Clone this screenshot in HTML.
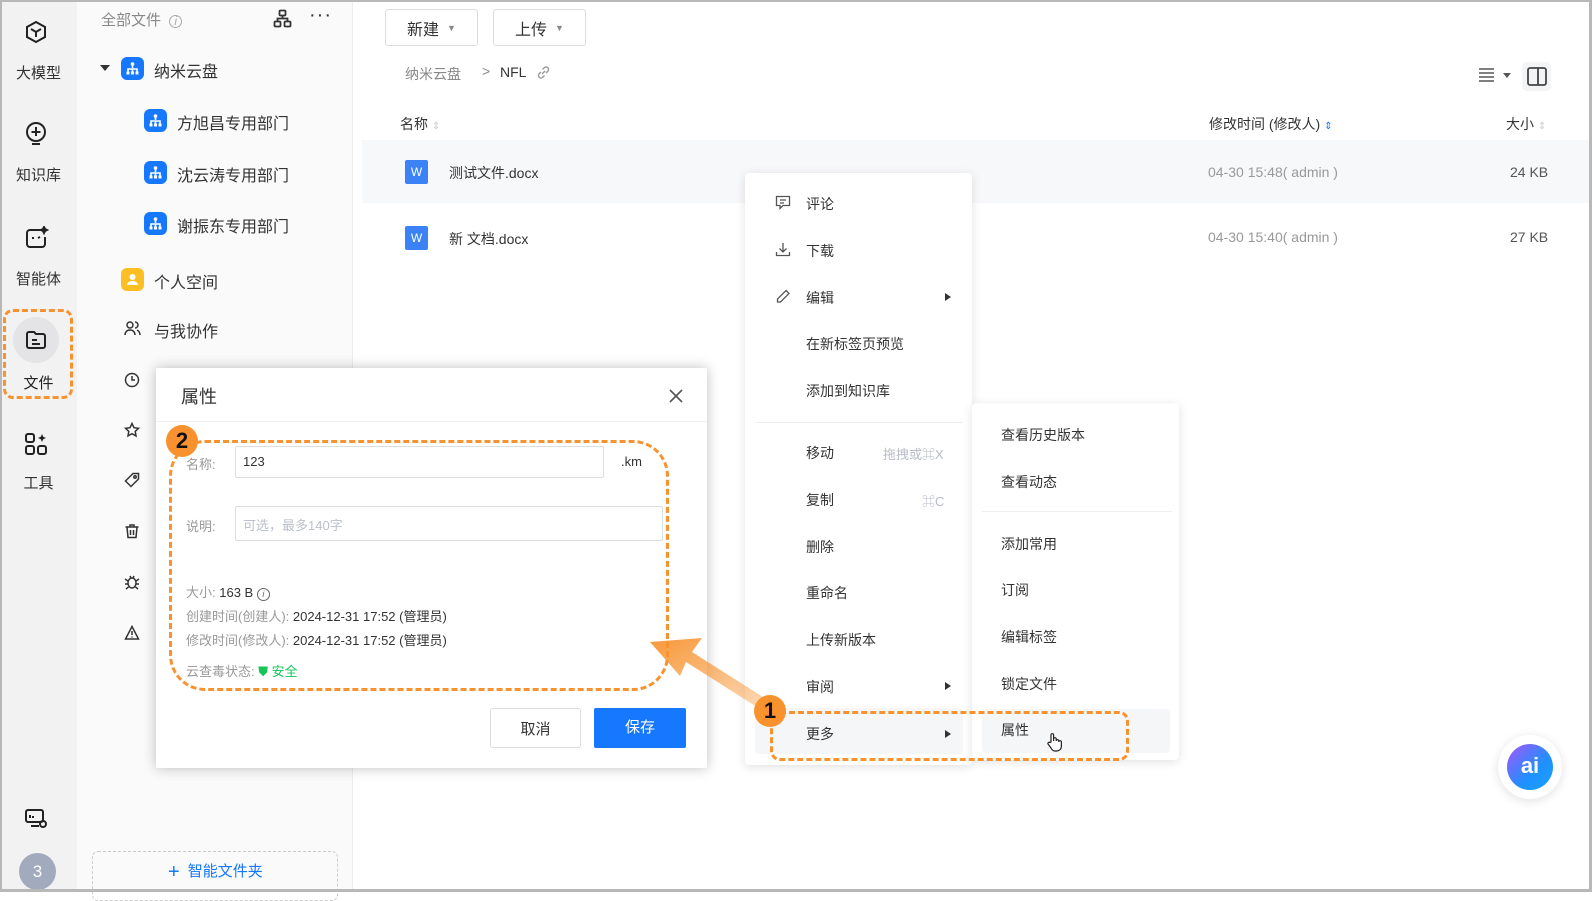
<!DOCTYPE html>
<html><head><meta charset="utf-8"><style>
*{margin:0;padding:0;box-sizing:border-box}
body{width:1592px;height:892px;overflow:hidden;background:#fff;font-family:"Liberation Sans","Noto Sans CJK SC",sans-serif;color:#333;position:relative}
.a{position:absolute;white-space:nowrap}
.frame{position:absolute;left:0;top:0;width:1592px;height:892px;border:2px solid #b8b8b8;border-right:3px solid #b8b8b8;border-bottom:3px solid #b8b8b8;pointer-events:none;z-index:50}
.rail{position:absolute;left:0;top:0;width:77px;height:892px;background:#f2f2f3}
.side{position:absolute;left:77px;top:0;width:276px;height:892px;background:#fafafa;border-right:1px solid #eee}
.rl{font-size:15px;color:#333;width:77px;text-align:center;left:0}
.blue{background:#1677ff;border-radius:6px;width:23px;height:23px}
.t16{font-size:16px;color:#333}
.btn{border:1px solid #ddd;border-radius:3px;font-size:16px;color:#333;display:flex;align-items:center;justify-content:center;gap:8px;background:#fff}
.menu{background:#fff;border-radius:4px;box-shadow:0 2px 10px rgba(0,0,0,.12)}
.mi{font-size:14px;color:#333}
.tri{width:0;height:0;border-left:6px solid #333;border-top:4px solid transparent;border-bottom:4px solid transparent}
.dash{border:3px dashed #f7922e}
.num{width:32px;height:32px;border-radius:50%;background:#f7922e;color:#111;font-weight:bold;font-size:22px;display:flex;align-items:center;justify-content:center}
.lab{color:#999;font-size:13px}
</style></head><body>
<div class="rail"></div>
<div class="side"></div>

<svg width="0" height="0" style="position:absolute"><defs><g id="org"><rect x="0" y="0" width="23" height="23" rx="6" fill="#1677ff"/><path d="M11.5 7v4M7 15v-3h9v3M11.5 12v3" stroke="#fff" stroke-width="1.6" fill="none"/><circle cx="11.5" cy="7" r="1.8" fill="#fff"/><rect x="5.5" y="14.5" width="3" height="3" fill="#fff"/><rect x="10" y="14.5" width="3" height="3" fill="#fff"/><rect x="14.5" y="14.5" width="3" height="3" fill="#fff"/></g></defs></svg>

<!-- rail icons -->
<svg class="a" style="left:24px;top:20px" width="24" height="24" viewBox="0 0 24 24" fill="none" stroke="#222" stroke-width="2"><path d="M12 2l9 5v10l-9 5-9-5V7z"/><path d="M7 9l5 3 5-3M12 12v5"/></svg>
<div class="a rl" style="top:62px">大模型</div>
<svg class="a" style="left:24px;top:121px" width="24" height="26" viewBox="0 0 24 26" fill="none" stroke="#222" stroke-width="2"><circle cx="12" cy="11" r="9"/><path d="M12 6v9M7.5 11h9M8 23h8"/></svg>
<div class="a rl" style="top:164px">知识库</div>
<svg class="a" style="left:24px;top:226px" width="26" height="24" viewBox="0 0 26 24" fill="none" stroke="#222" stroke-width="2"><path d="M17 4H6a3 3 0 0 0-3 3v11a3 3 0 0 0 3 3h12a3 3 0 0 0 3-3v-7"/><path d="M9 11v2M14 12l2-1" /><path d="M20 1l1 2 2 1-2 1-1 2-1-2-2-1 2-1z" fill="#222"/></svg>
<div class="a rl" style="top:268px">智能体</div>
<div class="a" style="left:13px;top:317px;width:46px;height:46px;border-radius:50%;background:#e4e4e6"></div>
<svg class="a" style="left:25px;top:329px" width="22" height="22" viewBox="0 0 22 22" fill="none" stroke="#222" stroke-width="2"><path d="M2 5a2 2 0 0 1 2-2h5l2 2h7a2 2 0 0 1 2 2v10a2 2 0 0 1-2 2H4a2 2 0 0 1-2-2z"/><path d="M7 11h5M7 15h8"/></svg>
<div class="a rl" style="top:372px;color:#222">文件</div>
<div class="a dash" style="left:3px;top:309px;width:70px;height:90px;border-radius:10px"></div>
<svg class="a" style="left:24px;top:432px" width="24" height="24" viewBox="0 0 24 24" fill="none" stroke="#222" stroke-width="2"><rect x="2" y="2" width="8" height="8" rx="2"/><rect x="2" y="14" width="8" height="8" rx="2"/><rect x="14" y="14" width="8" height="8" rx="2"/><path d="M18 2l1.2 2.8L22 6l-2.8 1.2L18 10l-1.2-2.8L14 6l2.8-1.2z" fill="#222" stroke="none"/></svg>
<div class="a rl" style="top:472px">工具</div>
<svg class="a" style="left:24px;top:808px" width="24" height="22" viewBox="0 0 24 22" fill="none" stroke="#222" stroke-width="2"><rect x="2" y="2" width="17" height="12" rx="2"/><path d="M7 18h8M6 10V7M9 10V8"/><circle cx="19" cy="16" r="3"/></svg>
<div class="a" style="left:19px;top:853px;width:37px;height:37px;border-radius:50%;background:#a2abbd;color:#fff;font-size:17px;display:flex;align-items:center;justify-content:center">3</div>

<!-- sidebar -->
<div class="a" style="left:101px;top:9px;font-size:15px;color:#888">全部文件 <span style="font-size:12px;border:1px solid #aaa;border-radius:50%;display:inline-block;width:13px;height:13px;line-height:11px;text-align:center;color:#aaa;margin-left:4px;font-style:italic">i</span></div>
<svg class="a" style="left:273px;top:9px" width="19" height="19" viewBox="0 0 19 19" fill="none" stroke="#333" stroke-width="1.8"><rect x="6.5" y="1.5" width="6" height="5" rx="1"/><rect x="1.5" y="12.5" width="6" height="5" rx="1"/><rect x="11.5" y="12.5" width="6" height="5" rx="1"/><path d="M9.5 6.5v3M4.5 12.5v-3h10v3"/></svg>
<div class="a" style="left:309px;top:4px;font-size:20px;color:#333;letter-spacing:1px">···</div>
<div class="a" style="left:100px;top:65px;width:0;height:0;border-top:6px solid #333;border-left:5px solid transparent;border-right:5px solid transparent"></div>
<svg class="a" style="left:121px;top:57px" width="23" height="23"><use href="#org"/></svg>
<div class="a t16" style="left:154px;top:58px">纳米云盘</div>
<svg class="a" style="left:144px;top:109px" width="23" height="23"><use href="#org"/></svg><div class="a t16" style="left:177px;top:110px">方旭昌专用部门</div>
<svg class="a" style="left:144px;top:161px" width="23" height="23"><use href="#org"/></svg><div class="a t16" style="left:177px;top:162px">沈云涛专用部门</div>
<svg class="a" style="left:144px;top:212px" width="23" height="23"><use href="#org"/></svg><div class="a t16" style="left:177px;top:213px">谢振东专用部门</div>
<svg class="a" style="left:121px;top:268px" width="23" height="23"><rect width="23" height="23" rx="6" fill="#fbbf24"/><circle cx="11.5" cy="9" r="3" fill="#fff"/><path d="M6 17a5.5 4 0 0 1 11 0z" fill="#fff"/></svg>
<div class="a t16" style="left:154px;top:269px">个人空间</div>
<svg class="a" style="left:124px;top:320px" width="17" height="16" viewBox="0 0 17 16" fill="none" stroke="#333" stroke-width="1.5"><circle cx="6" cy="5" r="3"/><path d="M1 15c0-3 2-5 5-5s5 2 5 5M11 2a3 3 0 0 1 0 6M13 10c2 1 3 3 3 5"/></svg>
<div class="a t16" style="left:154px;top:318px">与我协作</div>
<svg class="a" style="left:124px;top:372px" width="16" height="16" viewBox="0 0 16 16" fill="none" stroke="#333" stroke-width="1.5"><circle cx="8" cy="8" r="6.5"/><path d="M8 4v4h3"/></svg>
<svg class="a" style="left:124px;top:422px" width="16" height="16" viewBox="0 0 16 16" fill="none" stroke="#333" stroke-width="1.5"><path d="M8 1.5l2 4.2 4.5.6-3.3 3.1.8 4.5L8 11.7l-4 2.2.8-4.5L1.5 6.3 6 5.7z"/></svg>
<svg class="a" style="left:124px;top:472px" width="16" height="16" viewBox="0 0 16 16" fill="none" stroke="#333" stroke-width="1.5"><path d="M9 1.5h5.5V7L7 14.5 1.5 9z"/><circle cx="11" cy="5" r="1.2"/></svg>
<svg class="a" style="left:124px;top:523px" width="16" height="16" viewBox="0 0 16 16" fill="none" stroke="#333" stroke-width="1.5"><path d="M1.5 4h13M6 4V2h4v2M3 4l1 10.5h8L13 4M6.5 7v5M9.5 7v5"/></svg>
<svg class="a" style="left:124px;top:574px" width="16" height="16" viewBox="0 0 16 16" fill="none" stroke="#333" stroke-width="1.5"><ellipse cx="8" cy="9" rx="4" ry="5"/><path d="M1 5l3 2M15 5l-3 2M1 10h3M15 10h-3M2 15l2.5-2M14 15l-2.5-2M6 2l1 2M10 2l-1 2"/></svg>
<svg class="a" style="left:124px;top:625px" width="16" height="16" viewBox="0 0 16 16" fill="none" stroke="#333" stroke-width="1.5"><path d="M8 1.5l6.5 12.5h-13z"/><path d="M8 6v4M8 11.5v1"/></svg>
<div class="a" style="left:92px;top:851px;width:246px;height:50px;border:1px dashed #ccc;border-radius:6px"></div>
<div class="a" style="left:168px;top:860px;font-size:15px;color:#1677ff"><span style="font-size:20px;margin-right:8px;vertical-align:-2px">+</span>智能文件夹</div>

<!-- main top -->
<div class="a btn" style="left:385px;top:9px;width:93px;height:37px">新建 <span style="font-size:9px;color:#888">▼</span></div>
<div class="a btn" style="left:493px;top:9px;width:93px;height:37px">上传 <span style="font-size:9px;color:#888">▼</span></div>
<div class="a" style="left:405px;top:64px;font-size:14px;color:#888">纳米云盘</div>
<div class="a" style="left:482px;top:63px;font-size:14px;color:#888">&gt;</div>
<div class="a" style="left:500px;top:64px;font-size:14px;color:#333">NFL</div>
<svg class="a" style="left:536px;top:65px" width="15" height="15" viewBox="0 0 15 15" fill="none" stroke="#999" stroke-width="1.4"><path d="M6 9l3-3M5 7L3 9a2.5 2.5 0 0 0 3.5 3.5L8.5 10.5M10 8l2-2A2.5 2.5 0 0 0 8.5 2.5L6.5 4.5"/></svg>
<svg class="a" style="left:1478px;top:67px" width="17" height="16" viewBox="0 0 17 16" fill="none" stroke="#555" stroke-width="1.5"><path d="M1 2h15M1 6h15M1 10h15M1 14h15"/></svg>
<div class="a" style="left:1503px;top:73px;width:0;height:0;border-top:5px solid #555;border-left:4px solid transparent;border-right:4px solid transparent"></div>
<div class="a" style="left:1522px;top:62px;width:29px;height:29px;background:#f3f4f6;border-radius:5px"></div>
<svg class="a" style="left:1527px;top:67px" width="20" height="19" viewBox="0 0 20 19" fill="none" stroke="#444" stroke-width="1.8"><rect x="1" y="1" width="18" height="17" rx="2"/><path d="M11 1v17"/></svg>
<div class="a" style="left:400px;top:114px;font-size:14px;color:#333">名称 <span style="color:#ccc;font-size:10px">⇕</span></div>
<div class="a" style="left:1209px;top:114px;font-size:14px;color:#333">修改时间 (修改人) <span style="color:#1677ff;font-size:10px">⇕</span></div>
<div class="a" style="left:1506px;top:114px;font-size:14px;color:#333">大小 <span style="color:#ccc;font-size:10px">⇕</span></div>
<div class="a" style="left:362px;top:140px;width:1228px;height:63px;background:#f7f8fa"></div>
<div class="a" style="left:405px;top:160px;width:23px;height:24px;background:#3b82f6;border-radius:2px;color:#fff;font-size:12px;text-align:center;line-height:24px">W</div>
<div class="a" style="left:449px;top:163px;font-size:14px">测试文件.docx</div>
<div class="a" style="left:1208px;top:164px;font-size:14px;color:#999">04-30 15:48( admin )</div>
<div class="a" style="left:1510px;top:164px;font-size:14px;color:#555">24 KB</div>
<div class="a" style="left:405px;top:226px;width:23px;height:24px;background:#3b82f6;border-radius:2px;color:#fff;font-size:12px;text-align:center;line-height:24px">W</div>
<div class="a" style="left:449px;top:229px;font-size:14px">新 文档.docx</div>
<div class="a" style="left:1208px;top:229px;font-size:14px;color:#999">04-30 15:40( admin )</div>
<div class="a" style="left:1510px;top:229px;font-size:14px;color:#555">27 KB</div>

<!-- context menu -->
<div class="a menu" style="left:745px;top:173px;width:227px;height:592px"></div>
<svg class="a" style="left:775px;top:195px" width="16" height="15" viewBox="0 0 16 15" fill="none" stroke="#555" stroke-width="1.3"><path d="M1.5 1.5h13v9H8l-3 3v-3H1.5z"/><path d="M5 5h6M5 8h4"/></svg>
<svg class="a" style="left:775px;top:242px" width="16" height="15" viewBox="0 0 16 15" fill="none" stroke="#555" stroke-width="1.3"><path d="M8 1v9M4.5 6.5L8 10l3.5-3.5M1.5 10v3.5h13V10"/></svg>
<svg class="a" style="left:775px;top:289px" width="16" height="15" viewBox="0 0 16 15" fill="none" stroke="#555" stroke-width="1.3"><path d="M11 1.5l3 3-8.5 8.5H2.5v-3z"/></svg>
<div class="a mi" style="left:806px;top:194px">评论</div>
<div class="a mi" style="left:806px;top:241px">下载</div>
<div class="a mi" style="left:806px;top:288px">编辑</div><div class="a tri" style="left:945px;top:293px"></div>
<div class="a mi" style="left:806px;top:334px">在新标签页预览</div>
<div class="a mi" style="left:806px;top:381px">添加到知识库</div>
<div class="a" style="left:755px;top:422px;width:208px;height:1px;background:#eee"></div>
<div class="a mi" style="left:806px;top:443px">移动</div><div class="a" style="left:883px;top:444px;font-size:13px;color:#b8bcc8">拖拽或⌘X</div>
<div class="a mi" style="left:806px;top:490px">复制</div><div class="a" style="left:922px;top:491px;font-size:13px;color:#b8bcc8">⌘C</div>
<div class="a mi" style="left:806px;top:537px">删除</div>
<div class="a mi" style="left:806px;top:583px">重命名</div>
<div class="a mi" style="left:806px;top:630px">上传新版本</div>
<div class="a mi" style="left:806px;top:677px">审阅</div><div class="a tri" style="left:945px;top:682px"></div>
<div class="a" style="left:755px;top:708px;width:208px;height:46px;background:#f5f6f8;border-radius:4px"></div>
<div class="a mi" style="left:806px;top:724px">更多</div><div class="a tri" style="left:945px;top:730px"></div>

<!-- submenu -->
<div class="a menu" style="left:972px;top:403px;width:207px;height:357px"></div>
<div class="a mi" style="left:1001px;top:425px">查看历史版本</div>
<div class="a mi" style="left:1001px;top:472px">查看动态</div>
<div class="a" style="left:982px;top:511px;width:190px;height:1px;background:#eee"></div>
<div class="a mi" style="left:1001px;top:534px">添加常用</div>
<div class="a mi" style="left:1001px;top:580px">订阅</div>
<div class="a mi" style="left:1001px;top:627px">编辑标签</div>
<div class="a mi" style="left:1001px;top:674px">锁定文件</div>
<div class="a" style="left:982px;top:709px;width:188px;height:44px;background:#f5f6f8;border-radius:4px"></div>
<div class="a mi" style="left:1001px;top:720px">属性</div>
<svg class="a" style="left:1046px;top:732px" width="18" height="20" viewBox="0 0 18 20" fill="#fff" stroke="#222" stroke-width="1.2"><path d="M5 10V3a1.3 1.3 0 0 1 2.6 0v6V7a1.3 1.3 0 0 1 2.6 0v2a1.3 1.3 0 0 1 2.6 0v1a1.3 1.3 0 0 1 2.6 0v4c0 3-2 5-5 5H9c-2 0-3-1-4-3l-3-4a1.3 1.3 0 0 1 2-1.5z"/></svg>

<!-- AI button -->
<div class="a" style="left:1498px;top:735px;width:64px;height:64px;border-radius:50%;background:#fff;box-shadow:0 2px 10px rgba(0,0,0,.12)"></div>
<div class="a" style="left:1507px;top:744px;width:46px;height:46px;border-radius:50%;background:linear-gradient(135deg,#a855f7,#1e90ff 60%,#1aa3ff);color:#fff;font-weight:bold;font-size:22px;text-align:center;line-height:44px">ai</div>

<!-- dialog -->
<div class="a" style="left:156px;top:368px;width:551px;height:400px;background:#fff;box-shadow:0 0 12px rgba(0,0,0,.25)"></div>
<div class="a" style="left:181px;top:383px;font-size:18px;color:#333">属性</div>
<svg class="a" style="left:669px;top:389px" width="14" height="14" viewBox="0 0 14 14" stroke="#555" stroke-width="1.6"><path d="M1 1l12 12M13 1L1 13"/></svg>
<div class="a" style="left:156px;top:421px;width:551px;height:1px;background:#eee"></div>
<div class="a lab" style="left:186px;top:454px">名称:</div>
<div class="a" style="left:235px;top:446px;width:369px;height:32px;border:1px solid #ddd;border-radius:2px;font-size:13px;padding:7px 7px">123</div>
<div class="a" style="left:621px;top:454px;font-size:13px;color:#333">.km</div>
<div class="a lab" style="left:186px;top:516px">说明:</div>
<div class="a" style="left:235px;top:506px;width:428px;height:35px;border:1px solid #ddd;border-radius:2px;font-size:13px;padding:8px 7px;color:#bcc0cc">可选，最多140字</div>
<div class="a lab" style="left:186px;top:582px">大小: <span style="color:#333">163 B</span> <span style="display:inline-block;width:13px;height:13px;border:1px solid #666;border-radius:50%;font-size:9px;line-height:11px;text-align:center;color:#666;font-style:italic">i</span></div>
<div class="a lab" style="left:186px;top:606px">创建时间(创建人): <span style="color:#333">2024-12-31 17:52 (管理员)</span></div>
<div class="a lab" style="left:186px;top:630px">修改时间(修改人): <span style="color:#333">2024-12-31 17:52 (管理员)</span></div>
<div class="a lab" style="left:186px;top:661px">云查毒状态: <span style="color:#16c45a">⛊ 安全</span></div>
<div class="a btn" style="left:490px;top:708px;width:91px;height:40px;font-size:15px">取消</div>
<div class="a" style="left:594px;top:708px;width:92px;height:40px;background:#1677ff;border-radius:2px;color:#fff;font-size:15px;text-align:center;line-height:40px">保存</div>

<!-- annotations -->
<div class="a dash" style="left:169px;top:440px;width:500px;height:251px;border-radius:36px"></div>
<div class="a num" style="left:166px;top:425px">2</div>
<div class="a dash" style="left:770px;top:711px;width:359px;height:50px;border-radius:10px"></div>
<svg class="a" style="left:640px;top:630px" width="140" height="90" viewBox="0 0 140 90"><defs><linearGradient id="g" x1="1" y1="1" x2="0" y2="0"><stop offset="0" stop-color="#f7922e" stop-opacity=".3"/><stop offset="1" stop-color="#f7922e" stop-opacity=".95"/></linearGradient></defs><polygon points="10,12 62,8 52,22 134,74 128,84 46,32 40,46" fill="url(#g)"/></svg>
<div class="a num" style="left:754px;top:695px">1</div>

<div class="frame"></div>
</body></html>
